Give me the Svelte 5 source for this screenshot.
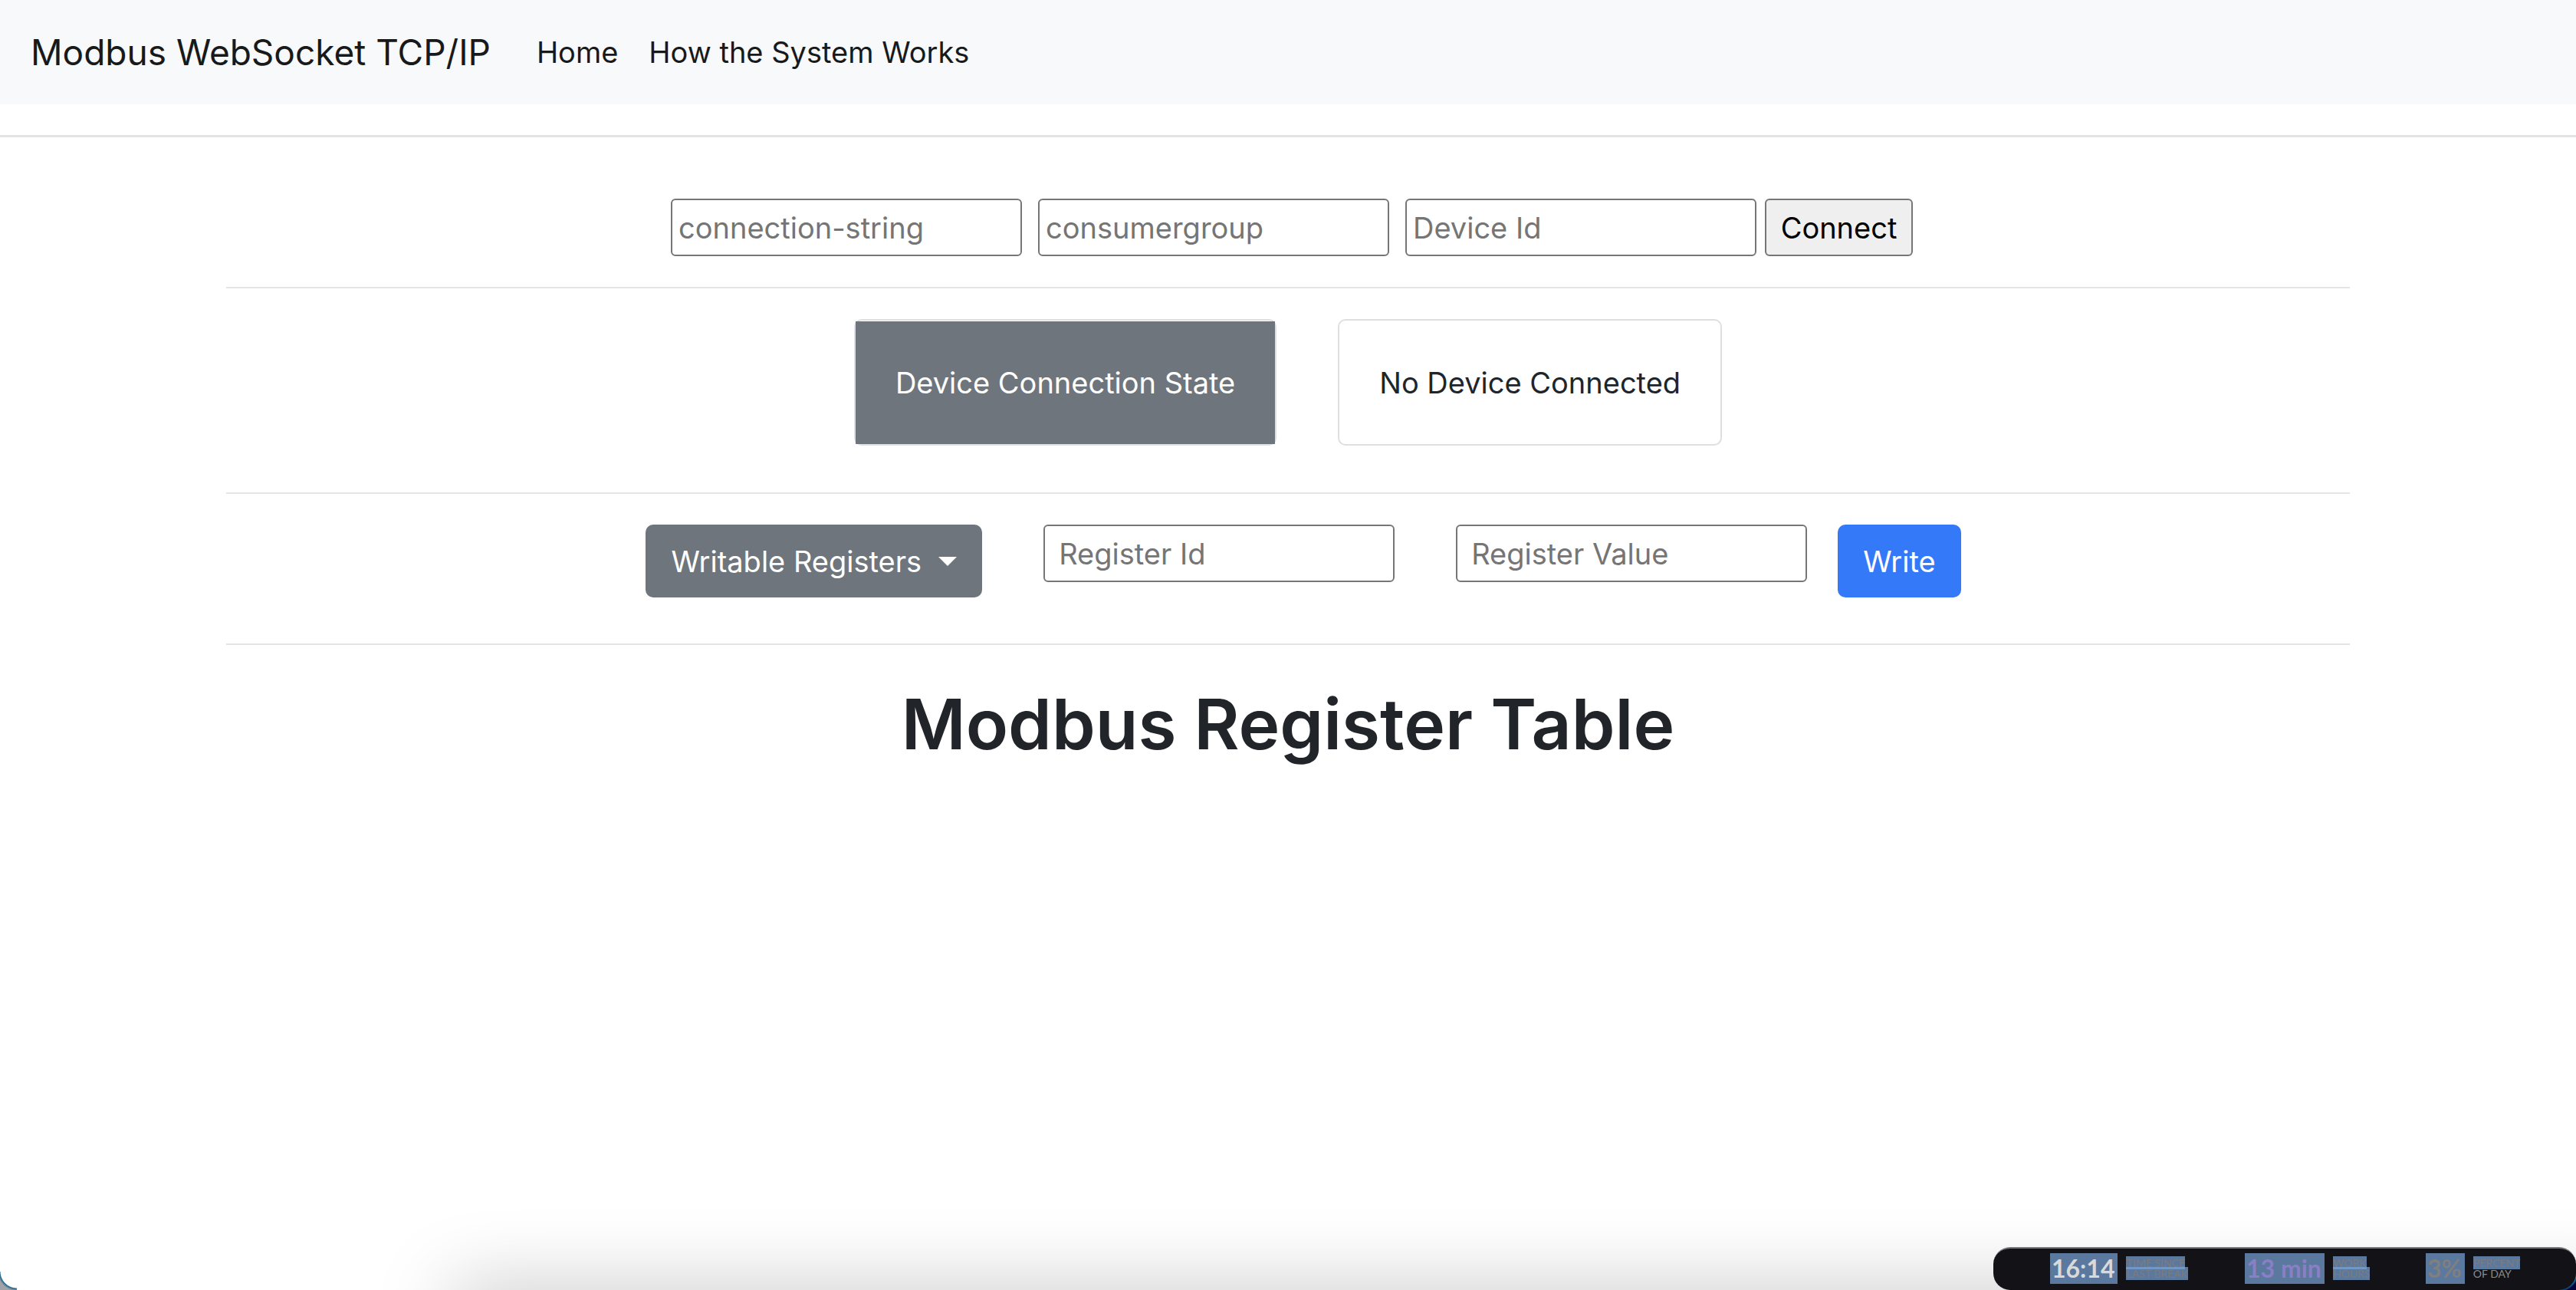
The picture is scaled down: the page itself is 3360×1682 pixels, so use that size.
<script>
  let connection = $state('');
  let group = $state('');
  let device = $state('');
  let registerId = $state('');
  let registerValue = $state('');
</script>

<div class="page">
  <nav class="navbar">
    <a class="brand" href="#top">Modbus WebSocket TCP/IP</a>
    <a href="#home">Home</a>
    <a href="#how">How the System Works</a>
  </nav>
  <hr class="full" />

  <main>
    <form class="row connect" onsubmit={(e) => e.preventDefault()}>
      <input type="text" aria-label="connection-string" placeholder="connection-string" bind:value={connection} />
      <input type="text" aria-label="consumergroup" placeholder="consumergroup" bind:value={group} />
      <input class="last" type="text" aria-label="Device Id" placeholder="Device Id" bind:value={device} />
      <button class="plain" type="submit">Connect</button>
    </form>
    <hr />

    <section class="row state">
      <div class="card label"><span>Device Connection State</span></div>
      <div class="card value"><span>No Device Connected</span></div>
    </section>
    <hr />

    <form class="row registers" onsubmit={(e) => e.preventDefault()}>
      <button class="btn dropdown" type="button">Writable Registers<i class="caret"></i></button>
      <input type="text" aria-label="Register Id" placeholder="Register Id" bind:value={registerId} />
      <input type="text" aria-label="Register Value" placeholder="Register Value" bind:value={registerValue} />
      <button class="btn primary" type="submit">Write</button>
    </form>
    <hr />

    <h1>Modbus Register Table</h1>
  </main>

  <div class="corner left"></div>
  <div class="shade"></div>
  <div class="corner right"></div>
  <aside class="timer">
    <div class="stat time"><b>16:14</b><p><span>TIME SINCE</span><br /><span>LAST BREAK</span></p></div>
    <div class="stat work"><b>13 min</b><p><span>WORK</span><br /><span>HOURS</span></p></div>
    <div class="stat percent"><b>3%</b><p><span>PERCENT</span><br />OF DAY</p></div>
  </aside>
</div>

<style>
  :global(body) { margin: 0; background: #fff; }
  .page {
    position: relative;
    min-height: 100vh;
    overflow: hidden;
    font-family: Inter, "Liberation Sans", sans-serif;
    font-size: 38px;
    line-height: 60px;
    color: #212529;
  }
  .navbar {
    display: flex;
    align-items: center;
    gap: 40px;
    height: 136px;
    padding: 0 40px;
    box-sizing: border-box;
    background: #f8f9fb;
  }
  .navbar a { color: #18191a; text-decoration: none; }
  .navbar .brand { font-size: 46px; margin-right: 20px; }
  hr { margin: 0; border: 0; border-top: 2px solid #e4e4e4; }
  hr.full { margin-top: 40px; border-top-width: 3px; }
  main { margin: 0 295px; }
  .row { display: flex; justify-content: center; align-items: flex-start; }
  input, button {
    box-sizing: border-box;
    font: inherit;
    margin: 0;
  }
  input {
    width: 458px;
    height: 75px;
    padding: 0 8px;
    border: 2px solid #767676;
    border-radius: 6px;
    background: #fff;
    color: #212529;
  }
  input::placeholder { color: #757575; opacity: 1; }
  .connect { padding: 80px 0 40px 10px; }
  .connect input { margin-right: 21px; }
  .connect input.last { margin-right: 11px; }
  .plain {
    height: 75px;
    width: 193px;
    padding: 0;
    border: 2px solid #767676;
    border-radius: 6px;
    background: #efefef;
    color: #000;
  }
  .state { gap: 80px; padding: 40px 0 61px; }
  .card {
    box-sizing: border-box;
    height: 165px;
    padding-top: 1px;
    border: 2px solid #dfdfdf;
    border-radius: 10px;
    display: flex;
  }
  .card span { display: flex; align-items: center; padding: 0 52px; white-space: nowrap; }
  .card.label span { background: #6e757c; color: #fff; }
  .registers { padding: 40px 0 60px 40px; }
  .registers input { margin-left: 80px; padding: 0 18px; }
  .btn {
    height: 95px;
    padding: 0 33px;
    border: 0;
    border-radius: 10px;
    color: #fff;
    white-space: nowrap;
  }
  .dropdown { display: flex; align-items: center; background: #6e757c; }
  .caret {
    margin-left: 22px;
    border-top: 12px solid #fff;
    border-left: 12px solid transparent;
    border-right: 12px solid transparent;
  }
  .primary { margin-left: 40px; background: #3479f7; }
  h1 {
    margin: 43px 0 0;
    font-size: 91px;
    line-height: 120px;
    font-weight: 600;
    text-align: center;
  }
  .corner {
    position: absolute;
    bottom: 0;
    width: 22px;
    height: 24px;
  }
  .corner.left {
    left: 0;
    background: radial-gradient(circle at 100% 0, transparent 21px, #1d668f 22px, #a0a4a8 25px);
  }
  .corner.right {
    right: 0;
    background: radial-gradient(circle at 0 0, #1d7fae 23px, #04043c 26px);
  }
  .shade {
    position: absolute;
    left: 590px;
    right: -100px;
    bottom: -60px;
    height: 60px;
    box-shadow: 0 0 100px 0 #00000044;
  }
  .timer {
    position: absolute;
    right: 0;
    bottom: 0;
    box-sizing: border-box;
    width: 760px;
    height: 56px;
    border-top: 2px solid #77777a;
    border-radius: 22px;
    background: #121217;
    font-family: Lato, sans-serif;
    color: #8b8a88;
  }
  .stat { position: absolute; top: 6px; display: flex; align-items: center; gap: 11px; }
  .stat b { font-size: 32px; line-height: 40px; background: #5b789f; padding: 0 4px 0 2px; white-space: nowrap; }
  .stat p { margin: 0; font-size: 14px; line-height: 14px; white-space: nowrap; }
  .stat span { background: #7aa4d9b3; color: #7a7c80; }
  .time { left: 74px; }
  .time b { color: #d9d9d9; }
  .work { left: 328px; }
  .work b { color: #8a7fc4; }
  .percent { left: 564px; }
  .percent b { color: #7f7f80; }
</style>
